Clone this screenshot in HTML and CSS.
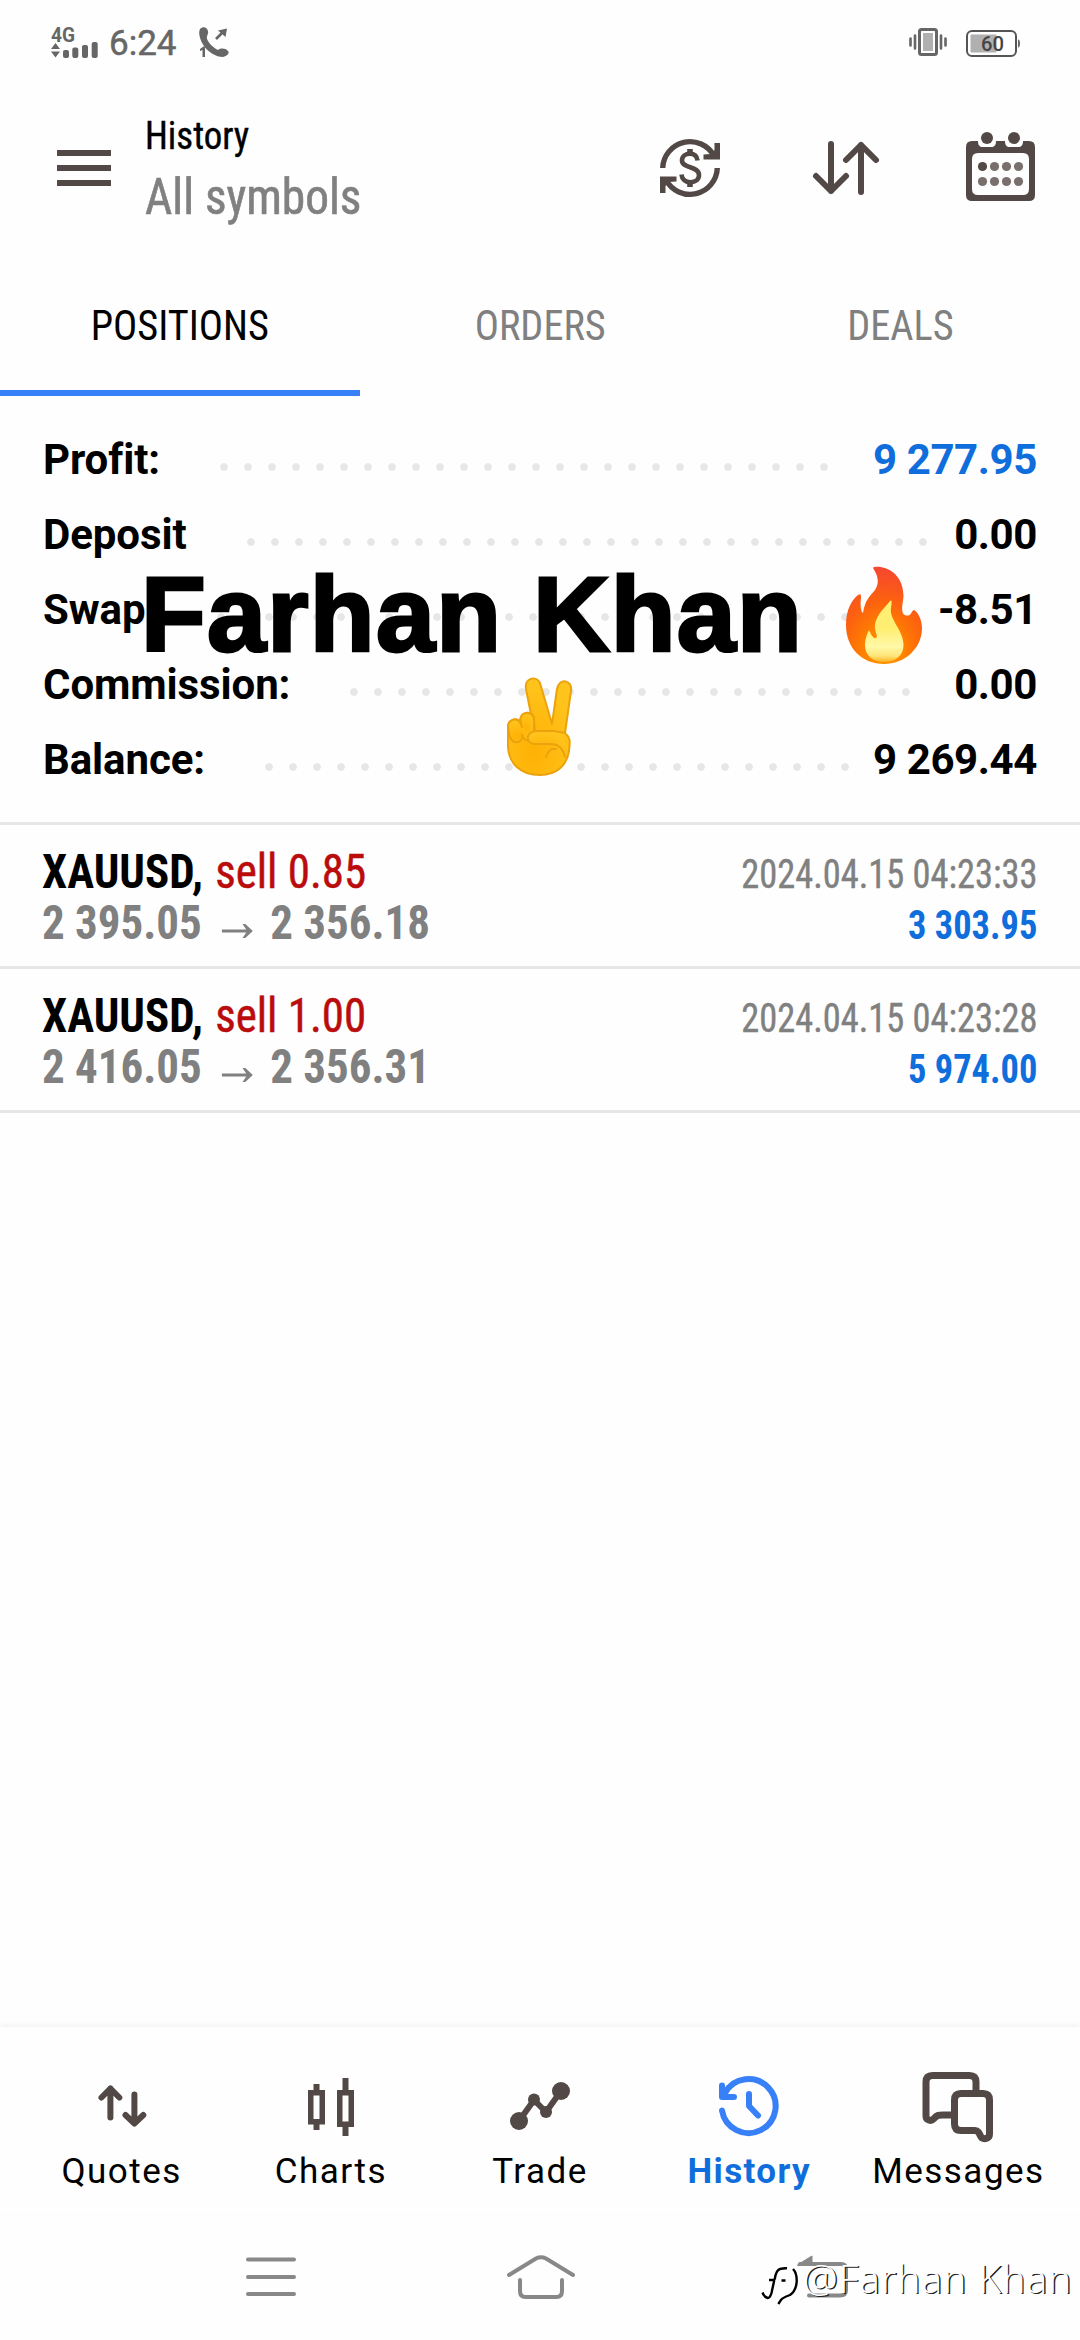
FILE: index.html
```html
<!DOCTYPE html>
<html lang="en">
<head>
<meta charset="utf-8">
<title>History</title>
<link rel="stylesheet" href="styles.css">
</head>
<body>
<div class="screen">
  <div class="status">
    <svg class="signal" width="48" height="32" viewBox="0 0 48 32">
      <text x="0" y="15" class="net" textLength="24" lengthAdjust="spacingAndGlyphs">4G</text>
      <path d="M0 22L4.500 16L9 22ZM0 24.500H9L4.500 30.500Z"/>
      <rect x="12" y="23" width="6" height="8" rx="2"/><rect x="21.300" y="20.500" width="6" height="10.500" rx="2"/>
      <rect x="31" y="18" width="6" height="13" rx="2"/><rect x="40.700" y="15" width="6" height="16" rx="2"/>
    </svg>
    <span class="clock">6:24</span>
    <svg class="call" width="31" height="31" viewBox="0 0 31 31">
      <path d="M1 2C4-1 8 0 9 4C10 8 6 9 9 14C12 19 17 22 19 23C22 21 26 21 29 24C31 26 28 29 24 30C17 30 9 25 5 19C1 13-1 6 1 2Z"/>
      <path d="M17 12L24 5" fill="none" stroke="#666" stroke-width="2.600"/><path d="M28 1.500L26.500 10L19 3.500Z"/>
      <path d="M1 22L4.500 19.500H6V30H3.500V23L1 24Z"/>
    </svg>
    <svg class="vibrate" width="38" height="28" viewBox="0 0 38 28">
      <rect x="10.500" y="1.500" width="17" height="25" rx="2" fill="#fff" stroke="#666" stroke-width="3"/>
      <rect x="14" y="5" width="10" height="18" fill="#b0b0b0"/>
      <path d="M1.500 10.500V17.500M6 7.500V20.500M32 7.500V20.500M36.500 10.500V17.500" stroke="#666" stroke-width="2.600" stroke-linecap="round"/>
    </svg>
    <svg class="battery" width="54" height="27" viewBox="0 0 54 27">
      <rect x="1" y="1" width="49" height="25" rx="5" fill="#fff" stroke="#555" stroke-width="2"/>
      <rect x="4.500" y="4.500" width="26" height="18" rx="1" fill="#b0b0b0"/>
      <path d="M52 9.500Q54 9.500 54 13.500T52 17.500Z"/>
      <text x="15" y="21" class="pct" textLength="23" lengthAdjust="spacingAndGlyphs">60</text>
    </svg>
  </div>

  <header class="appbar">
    <svg class="menu" width="54" height="36" viewBox="0 0 54 36"><path d="M0 0H54V6H0ZM0 15H54V21H0ZM0 30H54V36H0Z"/></svg>
    <div class="titles">
      <div class="title">History</div>
      <div class="subtitle">All symbols</div>
    </div>
    <svg class="currency" width="60" height="60" viewBox="0 0 60 60">
      <path d="M2.700 30A27.300 27.300 0 0 1 54 18M57.300 30A27.300 27.300 0 0 1 6 42" fill="none" stroke="#524845" stroke-width="5.400"/>
      <path d="M54.500 5H60V21.500H43.500V16.500L51 16L54.500 12ZM5.500 55H0V38.500H16.500V43.500L9 44L5.500 48Z"/>
      <path d="M30 11V16M30 44V49" fill="none" stroke="#524845" stroke-width="5.600"/>
      <path d="M37.500 22.500C37 18 34 15.800 30 15.800C25.500 15.800 22 18.500 22 22.500C22 31 39 27.500 39 37C39 41.500 35.500 44.200 30.500 44.200C25.500 44.200 22 41.500 21.500 36.500" fill="none" stroke="#524845" stroke-width="4.600"/>
    </svg>
    <svg class="sort" width="66" height="54" viewBox="0 0 66 54"><path d="M18 3V50M3 35L18 50L33 35M48 51V4M33 19L48 4L63 19"/></svg>
    <svg class="calendar" width="69" height="69" viewBox="0 0 69 69">
      <path fill-rule="evenodd" d="M6 9H12C12 13 13.500 15 17 15H25C28.500 15 30 13 30 9H39C39 13 40.500 15 44 15H52C55.500 15 57 13 57 9H63Q69 9 69 15V63Q69 69 63 69H6Q0 69 0 63V15Q0 9 6 9ZM12 21Q6 21 6 27V57Q6 63 12 63H57Q63 63 63 57V27Q63 21 57 21Z"/>
      <circle cx="21" cy="6" r="6"/><circle cx="48" cy="6" r="6"/><circle cx="16.500" cy="34.500" r="4.600"/>
      <g fill="#79706d"><circle cx="28.500" cy="34.500" r="4.600"/><circle cx="40.500" cy="34.500" r="4.600"/><circle cx="52.500" cy="34.500" r="4.600"/><circle cx="16.500" cy="49.500" r="4.600"/><circle cx="28.500" cy="49.500" r="4.600"/><circle cx="40.500" cy="49.500" r="4.600"/><circle cx="52.500" cy="49.500" r="4.600"/></g>
    </svg>
  </header>

  <nav class="tabs">
    <div class="tab active"><span>POSITIONS</span></div>
    <div class="tab"><span>ORDERS</span></div>
    <div class="tab"><span>DEALS</span></div>
  </nav>

  <section class="summary">
    <div class="sum"><span class="label">Profit:</span><i class="dots" style="--n:26"></i><span class="value up">9 277.95</span></div>
    <div class="sum"><span class="label">Deposit</span><i class="dots" style="--n:29"></i><span class="value">0.00</span></div>
    <div class="sum"><span class="label">Swap:</span><i class="dots" style="--n:29"></i><span class="value">-8.51</span></div>
    <div class="sum"><span class="label">Commission:</span><i class="dots" style="--n:24"></i><span class="value">0.00</span></div>
    <div class="sum"><span class="label">Balance:</span><i class="dots" style="--n:25"></i><span class="value">9 269.44</span></div>
  </section>

  <section class="deals">
    <div class="deal">
      <div class="left">
        <div class="name"><b>XAUUSD,</b><span class="side">sell 0.85</span></div>
        <div class="prices"><span>2 395.05</span><svg class="arrow" width="33" height="14" viewBox="0 0 33 14"><path d="M0 5.500H26L22 0H25L33 7L25 14H22L26 8.500H0Z"/></svg><span>2 356.18</span></div>
      </div>
      <div class="right"><div class="time">2024.04.15 04:23:33</div><div class="gain">3 303.95</div></div>
    </div>
    <div class="deal">
      <div class="left">
        <div class="name"><b>XAUUSD,</b><span class="side">sell 1.00</span></div>
        <div class="prices"><span>2 416.05</span><svg class="arrow" width="33" height="14" viewBox="0 0 33 14"><path d="M0 5.500H26L22 0H25L33 7L25 14H22L26 8.500H0Z"/></svg><span>2 356.31</span></div>
      </div>
      <div class="right"><div class="time">2024.04.15 04:23:28</div><div class="gain">5 974.00</div></div>
    </div>
  </section>

  <nav class="bottom">
    <div class="item">
      <svg width="84" height="84" viewBox="0 0 84 84"><path class="line" d="M30.400 53.500V24.500M21.500 33.500L30.400 24.500L39.300 33.500M54.400 30.500V59M45.500 51L54.400 59.500L63.300 51"/></svg>
      <span>Quotes</span>
    </div>
    <div class="item">
      <svg width="84" height="84" viewBox="0 0 84 84"><path d="M24.500 20H30.500V26H36V60.500H30.500V66H24.500V60.500H19V26H24.500ZM24.500 31.500V55H30.500V31.500ZM53.500 14H59.500V26H65V63H59.500V72H53.500V63H48V26H53.500ZM53.500 31.500V57.500H59.500V31.500Z" fill-rule="evenodd"/></svg>
      <span>Charts</span>
    </div>
    <div class="item">
      <svg width="84" height="84" viewBox="0 0 84 84"><path class="line" d="M21 57L36 36L48 48L63 27"/><circle cx="21" cy="57" r="9"/><circle cx="36" cy="35.500" r="6"/><circle cx="48" cy="48" r="6"/><circle cx="63" cy="27" r="9"/></svg>
      <span>Trade</span>
    </div>
    <div class="item current">
      <svg width="84" height="84" viewBox="0 0 84 84"><path class="line" d="M15 46.500A27 27 0 1 0 18 29M15 21.500V33H27M42 30V42L51 51.500"/></svg>
      <span>History</span>
    </div>
    <div class="item">
      <svg width="84" height="84" viewBox="0 0 84 84"><path class="line bold" d="M60 28V18Q60 11.500 53.500 11.500H16.500Q10 11.500 10 18V52C10 56 15 58 18 54.500C21 51 23 51 27 51H37M45 29.500H67Q73.500 29.500 73.500 36V70C73.500 75.500 66.500 76 64.500 72C63 68.500 62 66.500 59 66.500H45Q38.500 66.500 38.500 60V36Q38.500 29.500 45 29.500Z"/></svg>
      <span>Messages</span>
    </div>
  </nav>

  <div class="system">
    <svg width="50" height="40" viewBox="0 0 50 40"><path d="M2 2.500H48M2 20H48M2 37H48"/></svg>
    <svg class="home" width="72" height="44" viewBox="0 0 72 44"><path d="M4 20L31 3.500Q36 1 41 3.500L68 20M15 25V36Q15 42 20.500 42H51.500Q57 42 57 36V25"/></svg>
    <svg width="52" height="42" viewBox="0 0 52 42"><path d="M3 8H44Q49 8 49 13V34Q49 39.500 43 39.500H12"/><path class="head" d="M1 8.500L15 0V9.500H1Z"/></svg>
  </div>

  <div class="caption">
    <div class="caption-row">
      <span>Farhan Khan</span>
      <svg width="78" height="100" viewBox="0 0 78 100">
        <defs>
          <radialGradient id="f1" cx=".5" cy=".9" r=".95"><stop offset="0" stop-color="#ff9800"/><stop offset=".3" stop-color="#ff8000"/><stop offset=".6" stop-color="#fc6010"/><stop offset="1" stop-color="#f44336"/></radialGradient>
          <linearGradient id="f2" x1="0" y1="0" x2="0" y2="1"><stop offset="0" stop-color="#fff176"/><stop offset=".45" stop-color="#ffee70"/><stop offset=".75" stop-color="#fff9a8"/><stop offset=".9" stop-color="#ffe57a"/><stop offset="1" stop-color="#ffb020"/></linearGradient>
        </defs>
        <path fill="url(#f1)" d="M28 3C29 0 58 1 58.500 31C58 39 54 51 63 50.500C67 50 66 46 69 45C72 46 77 54 77 63C77 84 59 99 39 99C17 99 1 83 1 60C1 44 7 35 13 30C16 28 16 30 16 33C15 40 16 47 18 48C20 35 25 31 30 25C36 16 31 8 28 3Z"/>
        <path fill="url(#f2)" d="M45 36C47 34 47 38 46 43C44 54 58 65 58.500 79C59 91 50 97 39 97C27 97 20 90 20 80C20 74 22 69 24 65C26 69 28 74 31 73C33 72 31 69 30 64C29 51 40 43 45 36Z"/>
      </svg>
    </div>
    <svg class="victory" width="68" height="100" viewBox="0 0 68 100">
      <defs><radialGradient id="v" cx=".4" cy=".75" r=".7"><stop offset="0" stop-color="#ffb004"/><stop offset="1" stop-color="#ffc41c"/></radialGradient></defs>
      <g fill="url(#v)" stroke="#eba20c" stroke-width="2" stroke-linejoin="round" stroke-linecap="round">
        <path d="M29 58L20 12C18 1 30-2 34 6L46 47L51 12C53 0 67 3 65 14L59 56C65 61 64 65 63 74C61 88 51 98 34 98C14 98 2 86 2 68V50C2 42 11 40 14 45C14 34 26 33 28 41Z"/>
        <path d="M28 58V41C25 33 14 35 14.500 43L16 58"/>
        <path d="M16 50C13 38 2 42 2 50L4 60C8 69 18 65 16 58C19 66 26 64 28 59"/>
        <path d="M59 56L48 54H29C19 56 20 67 29 67H44C51 67 57 70 59 80M40 80C42 74 45 71 50 72"/>
      </g>
    </svg>
  </div>

  <div class="watermark">
    <svg width="38" height="46" viewBox="0 0 38 46">
      <path class="light" d="M4 18H12Q13 7 24 6.500Q33 7 33 19Q33 30 17 36V42M11 20L7 32Q5 37 1 32"/>
      <path class="dark" d="M7 20H13M12.700 19.500Q14 10 18 9T25 8.300M31 9Q35 13 34.700 21.700Q34 31 28 35Q20 38 19 40L16.300 44M12.300 20L9.500 33Q8 38 5.700 38Q2 37 .5 32.500M19.500 20.500H23.500"/>
    </svg>
    <span>@Farhan Khan</span>
  </div>
</div>
</body>
</html>
```
FILE: styles.css
```css
* { box-sizing: border-box; }
body { margin: 0; background: #fefefe; }
.screen {
  position: relative;
  width: 1080px;
  height: 2340px;
  overflow: hidden;
  display: flex;
  flex-direction: column;
  background: #fefefe;
  color: #000;
  font-family: Roboto, "Liberation Sans", sans-serif;
  white-space: nowrap;
}
svg { display: block; flex: none; overflow: visible; }

.status { display: flex; height: 84px; padding: 27px 60px 0 51px; fill: #666; color: #666; align-items: flex-start; }
.net { font-size: 20px; font-weight: 700; }
.clock { margin-left: 10px; width: 90px; font-size: 35px; line-height: 33px; -webkit-text-stroke: .5px #666; }
.vibrate { margin: 1px 19px 0 auto; }
.battery { margin-top: 3px; }
.pct { font-size: 21px; font-weight: 500; fill: #444; }

.appbar { display: flex; align-items: center; height: 168px; padding: 0 45px 0 57px; fill: #524845; }
.titles { flex: 1; margin-left: 34px; padding-top: 4px; font-family: "Roboto Condensed", Roboto, sans-serif; font-stretch: 75%; }
.title { font-size: 38px; line-height: 54px; transform: scaleX(.97); transform-origin: 0 0; -webkit-text-stroke: .4px #000; }
.subtitle { font-size: 50px; line-height: 68px; color: #808080; transform: scaleX(.947); transform-origin: 0 0; -webkit-text-stroke: .6px #808080; }
.currency { margin-right: 93px; }
.sort { margin-right: 87px; fill: none; stroke: #524845; stroke-width: 6; stroke-linecap: round; stroke-linejoin: round; }
.calendar { margin-top: -3px; }

.tabs { display: flex; height: 144px; font: 42px/148px "Roboto Condensed", Roboto, sans-serif; font-stretch: 75%; color: #808080; }
.tab { flex: 1; height: 144px; text-align: center; }
.tab span { display: inline-block; transform: scaleX(.96); }
.tab.active { color: #000; border-bottom: 6px solid #3880f8; }

.summary { padding: 26px 43px 25px; font-size: 42px; line-height: 75px; font-weight: 700; }
.sum { display: flex; height: 75px; }
.label { letter-spacing: -.1px; }
.value { letter-spacing: -.4px; margin-left: auto; }
.dots { width: calc(var(--n) * 24px); margin: 8px 0 0 52px; height: 75px; background: radial-gradient(circle at 12px 37px, #e6e6e6 3.4px, transparent 4.200px) 0 0 / 24px 75px repeat-x; }
.up { color: #106edc; }

.deals { font-family: "Roboto Condensed", Roboto, sans-serif; font-stretch: 75%; border-bottom: 3px solid #e6e6e6; }
.deal { display: flex; justify-content: space-between; height: 144px; padding: 21px 43px 0 42px; border-top: 3px solid #e6e6e6; line-height: 51px; }
.name, .prices { font-size: 48px; transform: scaleX(.937); transform-origin: 0 0; }
.side { margin-left: 13px; color: #ba0c0c; -webkit-text-stroke: .5px #ba0c0c; }
.prices { display: flex; align-items: center; height: 51px; font-weight: 700; color: #808080; fill: #808080; }
.arrow { margin: 16px 19px 0 21px; }
.right { padding-top: 3px; font-size: 40px; text-align: right; transform: scaleX(.91); transform-origin: 100% 0; }
.time { color: #808080; -webkit-text-stroke: .4px #808080; }
.gain { font-weight: 700; color: #106edc; }

.bottom { display: flex; margin-top: auto; height: 187px; padding: 37px 17px 0; background: #fefefe; box-shadow: 0 -2px 5px rgba(0, 0, 0, .05); }
.item { flex: 1; display: flex; flex-direction: column; align-items: center; fill: #524845; font-size: 35px; line-height: 42px; letter-spacing: 1.5px; }
.item svg { margin-bottom: 3px; }
.line { fill: none; stroke: #524845; stroke-width: 6; stroke-linecap: round; stroke-linejoin: round; }
.line.bold { stroke-width: 7; }
.current { color: #106edc; font-weight: 700; letter-spacing: 1.4px; }
.current .line { stroke: #3880f8; }

.system { display: flex; align-items: center; height: 126px; padding: 0 231px 0 246px; justify-content: space-between; fill: none; stroke: #888; stroke-width: 4; stroke-linecap: round; stroke-linejoin: round; }
.home { margin-right: 12px; }
.head { fill: #888; stroke-width: 1; }

.caption { position: absolute; left: 141px; top: 549px; font: 700 106px/130px "Liberation Sans", Arial, sans-serif; }
.caption-row { display: flex; height: 130px; }
.caption-row span { width: 704px; -webkit-text-stroke: 3px #000; letter-spacing: 1.3px; }
.caption-row svg { margin-top: 16px; }
.victory { margin: -2px 0 0 365px; }

.watermark { position: absolute; left: 762px; top: 2257px; display: flex; align-items: flex-start; gap: 3px; color: #fff; font: 300 39px/42px "Open Sans", "Noto Sans", sans-serif; letter-spacing: 1.1px; text-shadow: 1.4px 1.2px 0 #222; }
.watermark svg { margin-top: 3px; }
.watermark path { fill: none; }
.dark { stroke: #000; stroke-width: 2.4; }
.light { stroke: #fff; stroke-width: 6; }
```
